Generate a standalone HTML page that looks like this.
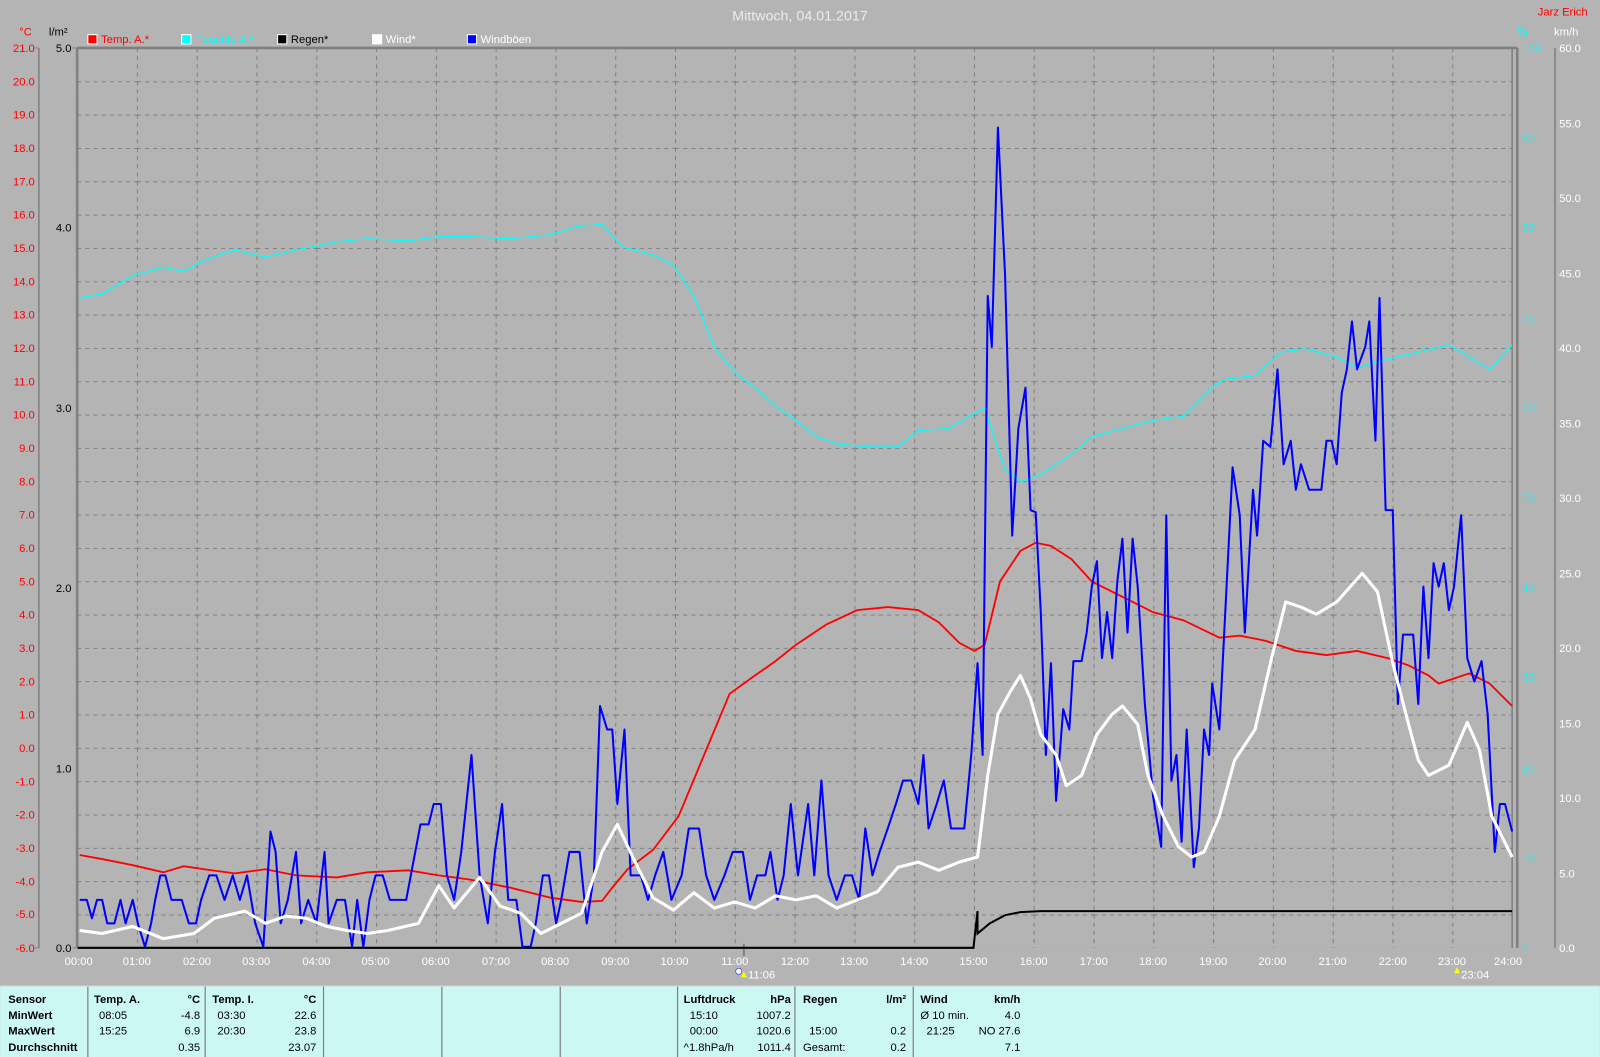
<!DOCTYPE html>
<html><head><meta charset="utf-8"><style>
html,body{margin:0;padding:0;background:#b4b4b4;}
svg{display:block;font-family:"Liberation Sans",sans-serif;}
</style></head><body>
<svg width="1600" height="1057" viewBox="0 0 1568 1036" xmlns="http://www.w3.org/2000/svg">
<defs>
<pattern id="g" x="75.5" y="47" width="58.6" height="32.667" patternUnits="userSpaceOnUse">
<line x1="0.5" y1="0" x2="0.5" y2="32.667" stroke="#808080" stroke-width="1" stroke-dasharray="4,4"/>
<line x1="0" y1="0.5" x2="58.6" y2="0.5" stroke="#808080" stroke-width="1" stroke-dasharray="4,4"/>
</pattern>
</defs>
<rect width="1568" height="1036" fill="#b4b4b4"/>
<rect x="75.5" y="47" width="1406.5" height="882" fill="url(#g)"/>
<text x="784" y="20" font-size="14" fill="#ececec" text-anchor="middle">Mittwoch, 04.01.2017</text>
<text x="1556" y="15" font-size="11" fill="#ff0000" text-anchor="end">Jarz Erich</text>
<!-- legend -->
<g font-size="11">
<rect x="86" y="34" width="9" height="9" fill="#ff0000" stroke="#fff"/><text x="99" y="42" fill="#ff0000">Temp. A.*</text>
<rect x="178" y="34" width="9" height="9" fill="#00ffff" stroke="#fff"/><text x="192" y="42" fill="#00ffff">Feuchte A.*</text>
<rect x="272" y="34" width="9" height="9" fill="#000" stroke="#fff"/><text x="285" y="42" fill="#000">Regen*</text>
<rect x="365" y="34" width="9" height="9" fill="#fff" stroke="#fff"/><text x="378" y="42" fill="#fff">Wind*</text>
<rect x="458" y="34" width="9" height="9" fill="#0000ff" stroke="#fff"/><text x="471" y="42" fill="#fff">Windböen</text>
<text x="25" y="35" fill="#ff0000" text-anchor="middle">°C</text>
<text x="57" y="35" fill="#000" text-anchor="middle">l/m²</text>
<text x="1492" y="35" fill="#00ffff" text-anchor="middle">%</text>
<text x="1535" y="35" fill="#fff" text-anchor="middle">km/h</text>
</g>
<!-- axes -->
<g stroke="#808080" fill="none">
<line x1="38" y1="47" x2="38" y2="929" stroke-width="1.5"/>
<line x1="1524" y1="47" x2="1524" y2="929" stroke-width="1.5"/>
<line x1="75.5" y1="47" x2="75.5" y2="929" stroke-width="2.5"/>
<line x1="75.5" y1="47" x2="1487" y2="47" stroke-width="2.5"/>
<line x1="1482" y1="47" x2="1482" y2="929" stroke-width="1.5"/>
<line x1="1487" y1="47" x2="1487" y2="929" stroke-width="2.5"/>
</g>
<g font-size="11" fill="#ff0000" text-anchor="end">
<text x="34" y="933">-6.0</text><text x="34" y="900">-5.0</text><text x="34" y="868">-4.0</text><text x="34" y="835">-3.0</text><text x="34" y="802">-2.0</text><text x="34" y="770">-1.0</text><text x="34" y="737">0.0</text><text x="34" y="704">1.0</text><text x="34" y="672">2.0</text><text x="34" y="639">3.0</text><text x="34" y="606">4.0</text><text x="34" y="574">5.0</text><text x="34" y="541">6.0</text><text x="34" y="508">7.0</text><text x="34" y="476">8.0</text><text x="34" y="443">9.0</text><text x="34" y="410">10.0</text><text x="34" y="378">11.0</text><text x="34" y="345">12.0</text><text x="34" y="312">13.0</text><text x="34" y="280">14.0</text><text x="34" y="247">15.0</text><text x="34" y="214">16.0</text><text x="34" y="182">17.0</text><text x="34" y="149">18.0</text><text x="34" y="116">19.0</text><text x="34" y="84">20.0</text><text x="34" y="51">21.0</text>
</g>
<g stroke="#808080"><line x1="34" y1="929" x2="38" y2="929"/><line x1="34" y1="47" x2="38" y2="47"/><line x1="71" y1="929" x2="75" y2="929"/><line x1="71" y1="47" x2="75" y2="47"/></g>
<g font-size="11" fill="#000" text-anchor="end">
<text x="70" y="933">0.0</text><text x="70" y="757">1.0</text><text x="70" y="580">2.0</text><text x="70" y="404">3.0</text><text x="70" y="227">4.0</text><text x="70" y="51">5.0</text>
</g>
<g font-size="11" fill="#00ffff">
<text x="1492" y="933">0</text><text x="1492" y="845">10</text><text x="1492" y="757">20</text><text x="1492" y="668">30</text><text x="1492" y="580">40</text><text x="1492" y="492">50</text><text x="1492" y="404">60</text><text x="1492" y="316">70</text><text x="1492" y="227">80</text><text x="1492" y="139">90</text><text x="1492" y="51">100</text>
</g>
<g font-size="11" fill="#fff">
<text x="1528" y="933">0.0</text><text x="1528" y="860">5.0</text><text x="1528" y="786">10.0</text><text x="1528" y="713">15.0</text><text x="1528" y="639">20.0</text><text x="1528" y="566">25.0</text><text x="1528" y="492">30.0</text><text x="1528" y="419">35.0</text><text x="1528" y="345">40.0</text><text x="1528" y="272">45.0</text><text x="1528" y="198">50.0</text><text x="1528" y="125">55.0</text><text x="1528" y="51">60.0</text>
</g>
<g font-size="11" fill="#fff" text-anchor="middle">
<text x="77" y="946">00:00</text><text x="134" y="946">01:00</text><text x="193" y="946">02:00</text><text x="251" y="946">03:00</text><text x="310" y="946">04:00</text><text x="368" y="946">05:00</text><text x="427" y="946">06:00</text><text x="486" y="946">07:00</text><text x="544" y="946">08:00</text><text x="603" y="946">09:00</text><text x="661" y="946">10:00</text><text x="720" y="946">11:00</text><text x="779" y="946">12:00</text><text x="837" y="946">13:00</text><text x="896" y="946">14:00</text><text x="954" y="946">15:00</text><text x="1013" y="946">16:00</text><text x="1072" y="946">17:00</text><text x="1130" y="946">18:00</text><text x="1189" y="946">19:00</text><text x="1247" y="946">20:00</text><text x="1306" y="946">21:00</text><text x="1365" y="946">22:00</text><text x="1423" y="946">23:00</text><text x="1478" y="946">24:00</text>
</g>
<g font-size="11" fill="#fff"><circle cx="724" cy="952" r="3" fill="#fff" stroke="#00f" stroke-width="0.5"/><path d="M726 958 l3 -6 l3 6z" fill="#ff0"/><text x="733" y="959">11:06</text>
<path d="M1425 954 l3 -6 l3 6z" fill="#ff0"/><text x="1432" y="959">23:04</text></g>
<line x1="729" y1="925" x2="729" y2="937" stroke="#808080" stroke-width="2"/>
<!-- curves -->
<polyline fill="none" stroke="#00ffff" stroke-width="1.3" points="78,292 100,288 130,270 160,262 180,266 200,255 230,245 260,252 290,245 330,237 360,234 400,236 430,232 460,232 500,234 540,230 565,222 590,220 610,242 640,250 660,260 680,290 700,340 720,365 740,380 760,398 780,412 800,428 820,435 850,438 880,438 900,422 930,420 950,408 965,400 975,430 985,460 1000,472 1020,465 1050,445 1070,428 1100,420 1130,412 1160,408 1190,378 1200,372 1230,368 1255,345 1280,342 1310,350 1330,360 1360,352 1390,345 1420,338 1440,350 1460,362 1482,338"/>
<polyline fill="none" stroke="#ff0000" stroke-width="1.8" points="78,838 100,842 130,848 160,855 180,849 200,852 230,856 260,852 290,858 330,860 360,855 400,853 430,858 460,862 500,870 540,880 570,884 590,883 600,870 615,852 640,833 665,800 690,740 715,680 740,662 760,648 780,632 810,612 840,598 870,595 900,598 920,610 940,630 955,638 965,632 980,570 1000,540 1015,532 1030,535 1050,548 1070,570 1100,585 1130,600 1160,608 1195,625 1215,623 1240,628 1270,638 1300,642 1330,638 1360,645 1380,652 1400,662 1410,670 1425,665 1440,660 1460,670 1482,692"/>
<polyline fill="none" stroke="#0000ff" stroke-width="2" stroke-linejoin="round" points="78,882 85,882 90,900 95,882 100,882 105,905 112,905 118,882 123,905 130,882 135,905 142,928 148,905 152,882 157,858 162,858 168,882 178,882 185,905 192,905 197,882 205,858 212,858 220,882 228,858 235,882 242,858 250,905 258,928 265,815 270,835 275,905 282,882 290,835 295,905 302,882 310,905 318,835 322,905 330,882 338,882 345,928 350,882 356,928 362,882 368,858 375,858 382,882 398,882 412,808 420,808 425,788 432,788 438,858 445,882 452,835 462,740 470,858 478,905 485,835 492,788 498,882 506,882 512,928 520,928 525,905 532,858 538,858 545,905 550,882 558,835 568,835 575,905 582,858 588,692 595,715 600,715 605,788 612,715 618,858 628,858 635,882 642,858 650,835 658,882 668,858 675,812 685,812 692,858 700,882 710,858 718,835 728,835 735,882 742,858 750,858 755,835 762,882 768,858 775,788 782,858 792,788 798,858 805,765 812,858 820,882 828,858 835,858 842,882 848,812 855,858 862,835 870,812 878,788 885,765 893,765 900,788 905,740 910,812 918,788 925,765 932,812 945,812 952,738 958,650 963,740 968,290 972,340 978,125 985,270 992,525 998,420 1005,380 1010,500 1015,502 1020,600 1025,740 1030,650 1035,785 1042,695 1048,715 1052,648 1060,648 1065,620 1070,575 1075,550 1080,645 1085,600 1090,645 1095,570 1100,528 1105,620 1110,528 1115,575 1122,690 1130,780 1138,830 1143,505 1148,765 1153,740 1158,825 1163,715 1170,850 1175,812 1180,715 1185,740 1188,670 1195,715 1208,458 1215,505 1220,620 1228,480 1232,525 1238,432 1245,438 1252,362 1258,455 1265,432 1270,480 1275,455 1283,480 1295,480 1300,432 1305,432 1310,455 1315,385 1320,362 1325,315 1330,362 1338,340 1342,315 1348,432 1352,292 1358,500 1365,500 1370,690 1375,622 1385,622 1390,690 1395,575 1400,645 1405,552 1410,575 1415,552 1420,598 1425,575 1432,505 1438,645 1445,668 1452,648 1458,700 1465,835 1470,788 1475,788 1482,815"/>
<polyline fill="none" stroke="#ffffff" stroke-width="3" stroke-linejoin="round" points="78,912 100,915 130,908 160,920 190,915 210,900 240,893 260,905 280,898 300,900 320,908 340,912 360,915 380,912 410,905 430,868 445,890 470,860 490,888 510,895 530,915 550,905 570,895 590,835 605,808 620,840 640,880 660,892 680,875 700,890 720,884 740,890 760,878 780,882 800,878 820,890 840,882 860,874 880,850 900,845 920,853 940,845 958,840 968,760 978,700 990,678 1000,662 1010,685 1020,720 1035,740 1045,770 1060,760 1075,720 1090,700 1100,692 1115,710 1125,760 1140,800 1155,830 1168,840 1180,835 1195,800 1210,745 1230,715 1245,650 1260,590 1275,595 1290,602 1310,590 1335,562 1350,580 1365,650 1380,708 1390,745 1400,760 1420,750 1438,708 1450,735 1462,800 1482,840"/>
<polyline fill="none" stroke="#000" stroke-width="2" points="76,929 954,929 958,893 958,915 970,905 985,897 1000,894 1020,893 1482,893"/>
<!-- table -->
<rect x="0" y="967" width="1568" height="69" fill="#ccf8f4"/>
<line x1="0" y1="966.5" x2="1568" y2="966.5" stroke="#e0e0e0"/>
<g stroke="#808080" stroke-width="1.2">
<line x1="86" y1="967" x2="86" y2="1036"/><line x1="201" y1="967" x2="201" y2="1036"/><line x1="317" y1="967" x2="317" y2="1036"/><line x1="433" y1="967" x2="433" y2="1036"/><line x1="549" y1="967" x2="549" y2="1036"/><line x1="664" y1="967" x2="664" y2="1036"/><line x1="779" y1="967" x2="779" y2="1036"/><line x1="895" y1="967" x2="895" y2="1036"/>
</g>
<g font-size="11" fill="#000">
<g font-weight="bold"><text x="8" y="983">Sensor</text><text x="8" y="999">MinWert</text><text x="8" y="1014">MaxWert</text><text x="8" y="1030">Durchschnitt</text>
<text x="92" y="983">Temp. A.</text><text x="196" y="983" text-anchor="end">°C</text>
<text x="208" y="983">Temp. I.</text><text x="310" y="983" text-anchor="end">°C</text>
<text x="670" y="983">Luftdruck</text><text x="775" y="983" text-anchor="end">hPa</text>
<text x="787" y="983">Regen</text><text x="888" y="983" text-anchor="end">l/m²</text>
<text x="902" y="983">Wind</text><text x="1000" y="983" text-anchor="end">km/h</text></g>
<text x="97" y="999">08:05</text><text x="196" y="999" text-anchor="end">-4.8</text>
<text x="97" y="1014">15:25</text><text x="196" y="1014" text-anchor="end">6.9</text>
<text x="196" y="1030" text-anchor="end">0.35</text>
<text x="213" y="999">03:30</text><text x="310" y="999" text-anchor="end">22.6</text>
<text x="213" y="1014">20:30</text><text x="310" y="1014" text-anchor="end">23.8</text>
<text x="310" y="1030" text-anchor="end">23.07</text>
<text x="676" y="999">15:10</text><text x="775" y="999" text-anchor="end">1007.2</text>
<text x="676" y="1014">00:00</text><text x="775" y="1014" text-anchor="end">1020.6</text>
<text x="670" y="1030">^1.8hPa/h</text><text x="775" y="1030" text-anchor="end">1011.4</text>
<text x="793" y="1014">15:00</text><text x="888" y="1014" text-anchor="end">0.2</text>
<text x="787" y="1030">Gesamt:</text><text x="888" y="1030" text-anchor="end">0.2</text>
<text x="902" y="999">Ø 10 min.</text><text x="1000" y="999" text-anchor="end">4.0</text>
<text x="908" y="1014">21:25</text><text x="1000" y="1014" text-anchor="end">NO 27.6</text>
<text x="1000" y="1030" text-anchor="end">7.1</text>
</g>
</svg>
</body></html>
